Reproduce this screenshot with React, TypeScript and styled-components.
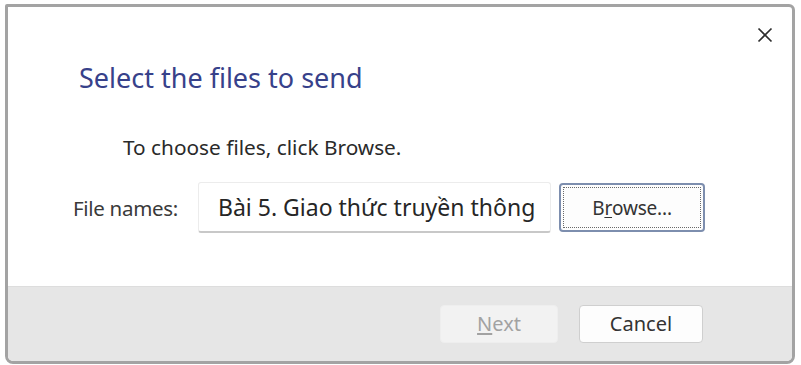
import React from "react";
import styled, { createGlobalStyle } from "styled-components";

const Global = createGlobalStyle`
  html, body { margin: 0; padding: 0; background: #ffffff; }
  body { width: 801px; height: 365px; overflow: hidden; font-family: "Noto Sans", "Open Sans", sans-serif; }
`;

const Page = styled.div`
  padding: 4px 6px 1px 5px;
  width: 801px;
  height: 365px;
  box-sizing: border-box;
`;

const Dialog = styled.div`
  box-sizing: border-box;
  width: 790px;
  height: 360px;
  border: 3px solid #a3a3a3;
  border-radius: 2px 6px 8px 8px;
  background: #ffffff;
  display: flex;
  flex-direction: column;
  overflow: hidden;
`;

const Body = styled.div`
  flex: 1;
  display: flex;
  flex-direction: column;
`;

const TopBar = styled.div`
  display: flex;
  justify-content: flex-end;
  height: 50px;
  padding: 16px 15px 0 0;
  box-sizing: border-box;
`;

const CloseButton = styled.button`
  width: 24px;
  height: 24px;
  padding: 0;
  border: none;
  background: transparent;
  display: flex;
  align-items: center;
  justify-content: center;
`;

const Title = styled.h1`
  margin: 0;
  padding-left: 71px;
  font-weight: 400;
  font-size: 27px;
  line-height: 42px;
  color: #37418a;
`;

const Instruction = styled.p`
  margin: 0;
  padding-left: 115px;
  padding-top: 33px;
  font-size: 20.8px;
  line-height: 30px;
  color: #2a2a2a;
`;

const FieldRow = styled.div`
  display: flex;
  align-items: center;
  padding-left: 65px;
  margin-top: 20px;
  height: 51px;
`;

const Label = styled.label`
  font-size: 20.5px;
  letter-spacing: -0.3px;
  color: #3a3a3a;
  width: 125px;
`;

const NameBox = styled.div`
  box-sizing: border-box;
  width: 353px;
  height: 51px;
  border: 1px solid #ececec;
  border-bottom: 2px solid #c8c8c8;
  border-radius: 3px;
  display: flex;
  align-items: center;
  padding-left: 19px;
  font-size: 23px;
  color: #262626;
  white-space: nowrap;
  overflow: hidden;
`;

const Button = styled.button<{ $variant?: "default" | "focus" | "disabled" }>`
  box-sizing: border-box;
  font-family: "Noto Sans", "Open Sans", sans-serif;
  border-radius: 4px;
  display: flex;
  align-items: center;
  justify-content: center;
  padding: 0;
  font-size: 16px;
  background: ${(p) => (p.$variant === "disabled" ? "#f2f2f2" : "#fdfdfd")};
  color: ${(p) => (p.$variant === "disabled" ? "#a2a2a2" : "#333333")};
  border: ${(p) =>
    p.$variant === "focus"
      ? "2px solid #7d8eae"
      : p.$variant === "disabled"
      ? "1px solid #eeeeee"
      : "1px solid #cfcfcf"};
  ${(p) =>
    p.$variant === "focus"
      ? "outline: 1px dotted #6a6a6a; outline-offset: -5px;"
      : ""}
`;

const BrowseButton = styled(Button)`
  width: 146px;
  height: 49px;
  margin-left: 8px;
  font-size: 19px;
  letter-spacing: -0.2px;
`;

const Footer = styled.div`
  height: 75px;
  box-sizing: border-box;
  background: #e6e6e6;
  border-top: 1px solid #dddddd;
  display: flex;
  justify-content: flex-end;
  align-items: center;
  gap: 21px;
  padding: 0 89px 1px 0;
`;

const FooterButton = styled(Button)`
  height: 38px;
  font-size: 20px;
`;

const Key = styled.span`
  text-decoration: underline;
  text-underline-offset: 2px;
`;

export default function App() {
  return (
    <>
      <Global />
      <Page>
        <Dialog>
          <Body>
            <TopBar>
              <CloseButton aria-label="Close">
                <svg width="16" height="16" viewBox="0 0 16 16">
                  <path d="M1.5 1.5 L14.5 14.5 M14.5 1.5 L1.5 14.5" stroke="#2e2e2e" strokeWidth="1.7" />
                </svg>
              </CloseButton>
            </TopBar>
            <Title>Select the files to send</Title>
            <Instruction>To choose files, click Browse.</Instruction>
            <FieldRow>
              <Label>File names:</Label>
              <NameBox>Bài 5. Giao thức truyền thông</NameBox>
              <BrowseButton $variant="focus">
                B<Key>r</Key>owse...
              </BrowseButton>
            </FieldRow>
          </Body>
          <Footer>
            <FooterButton $variant="disabled" style={{ width: 118 }}>
              <Key>N</Key>ext
            </FooterButton>
            <FooterButton style={{ width: 124 }}>Cancel</FooterButton>
          </Footer>
        </Dialog>
      </Page>
    </>
  );
}
